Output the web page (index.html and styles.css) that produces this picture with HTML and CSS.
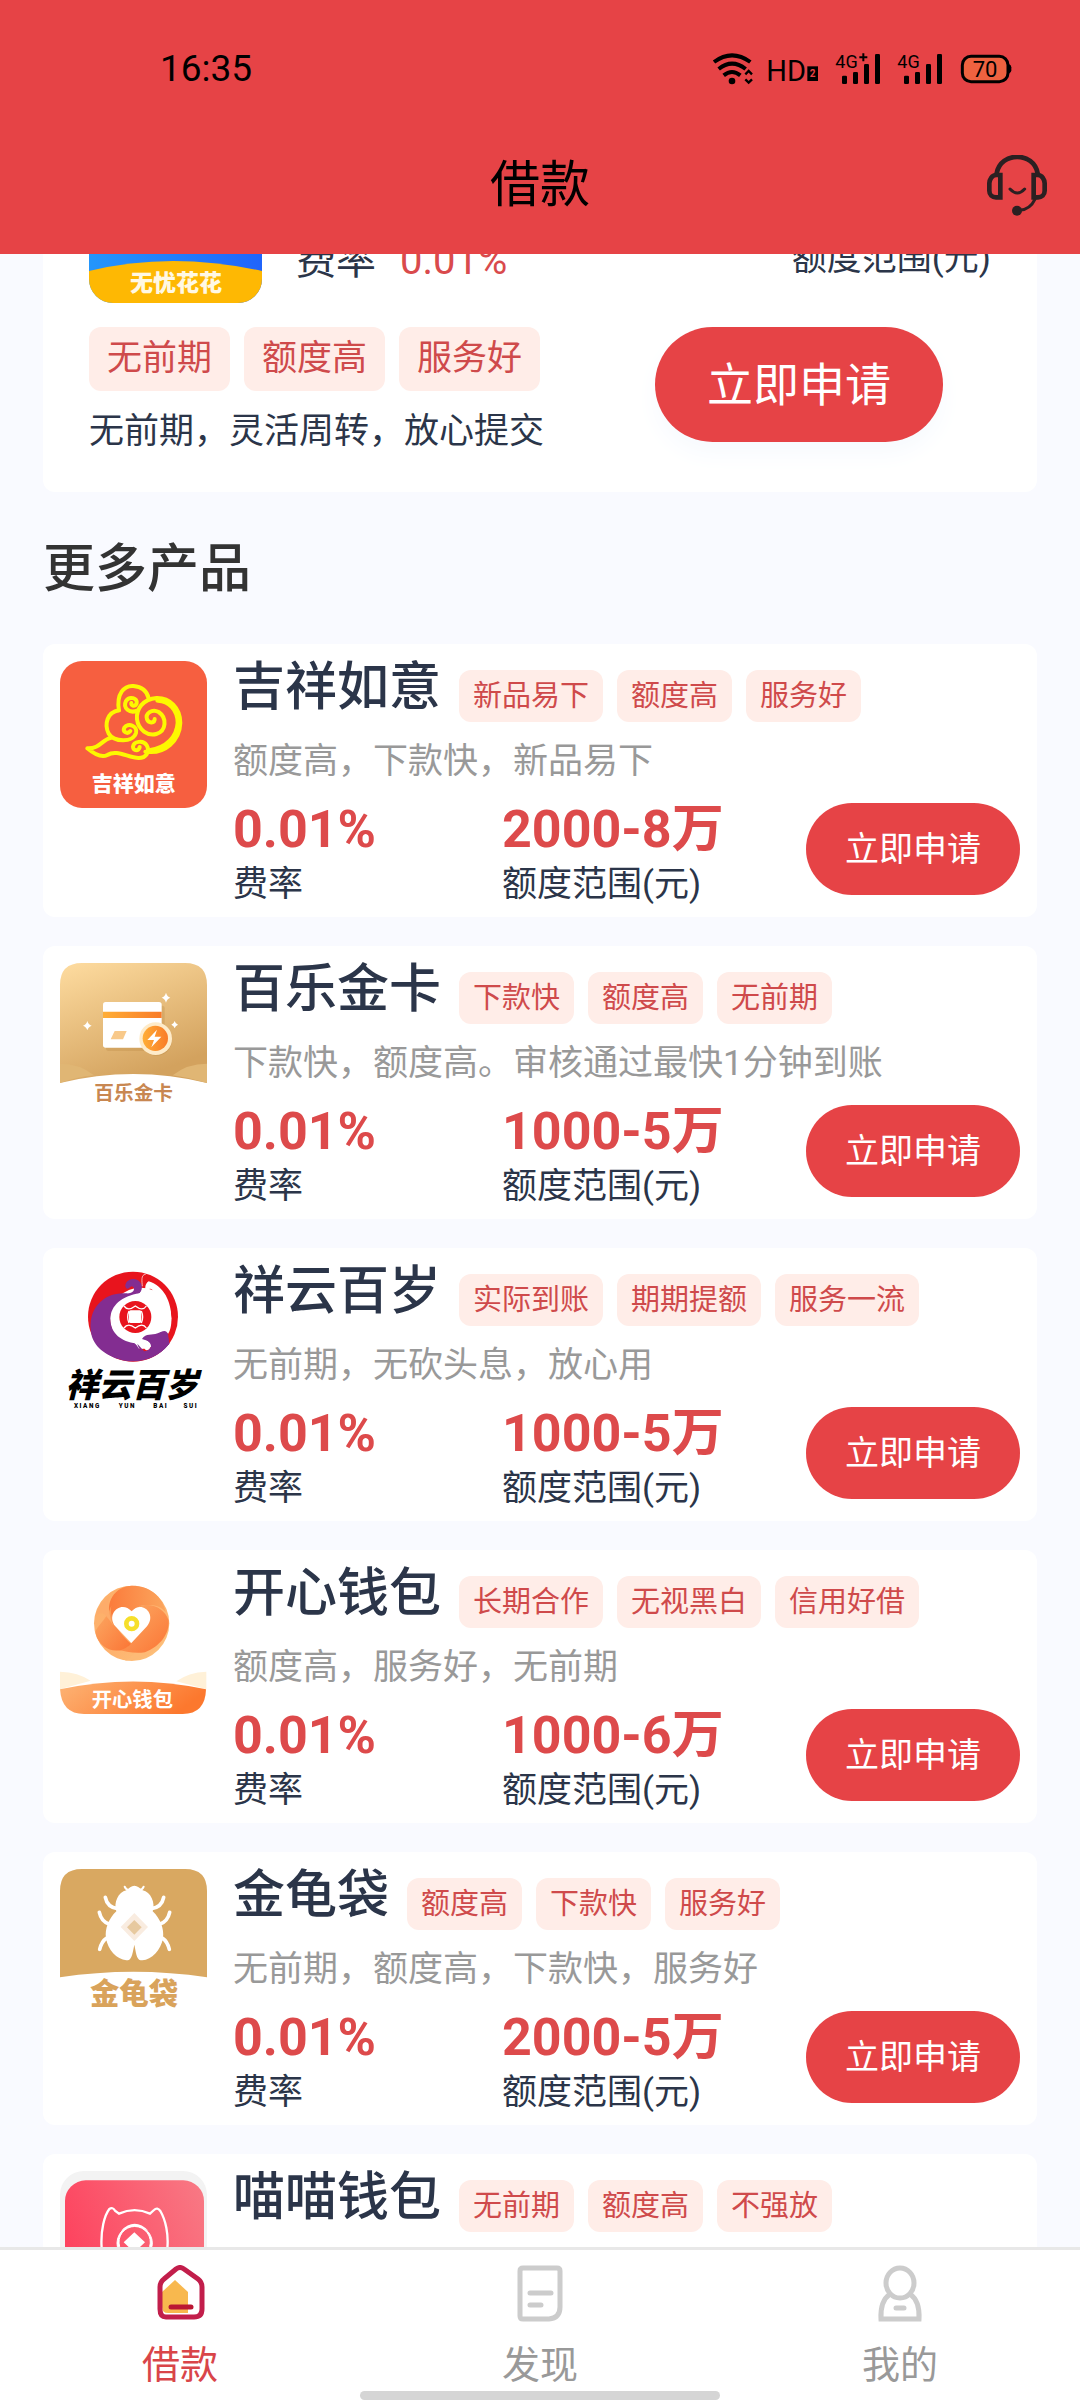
FILE: index.html
```html
<!DOCTYPE html>
<html lang="zh-CN">
<head>
<meta charset="utf-8">
<meta name="viewport" content="width=device-width, initial-scale=1">
<title>借款</title>
<link rel="stylesheet" href="styles.css">
</head>
<body>
<div class="app">
  <header class="header">
    <div class="status">
      <time class="status-time">16:35</time>
      <svg class="status-icons" viewBox="36 39 900 96" aria-hidden="true">
        <g fill="none" stroke="#000" stroke-width="9">
          <path d="M42 66Q96 26 151 66M56 87Q96 55 137 87M71 106Q96 86 121 106" stroke-width="12"/>
          <path d="M136 103l10-10 10 10M136 118l10 10 10-10" stroke-width="7"/>
          <rect x="787" y="49" width="137" height="76" rx="26" fill="#ee6240"/>
        </g>
        <circle cx="96" cy="123" r="10"/>
        <text x="199" y="123" font-size="87">HD</text>
        <rect x="322" y="79" width="32" height="44"/>
        <text x="329" y="111" font-size="30" font-weight="700" class="inverse">2</text>
        <text x="406" y="84" font-size="54">4G</text>
        <path d="M478 52h24M490 40v24" stroke="#000" stroke-width="6"/>
        <g>
          <rect x="426" y="107" width="15" height="25" rx="4"/><rect x="459" y="96" width="15" height="36" rx="4"/><rect x="492" y="72" width="15" height="60" rx="4"/><rect x="525" y="42" width="15" height="90" rx="4"/>
          <rect x="612" y="107" width="15" height="25" rx="4"/><rect x="645" y="96" width="15" height="36" rx="4"/><rect x="678" y="72" width="15" height="60" rx="4"/><rect x="711" y="42" width="15" height="90" rx="4"/>
          <path d="M926 72q8 2 8 10v9q0 8-8 10z"/>
        </g>
        <text x="592" y="84" font-size="54">4G</text>
        <text x="855" y="110" font-size="66" text-anchor="middle">70</text>
      </svg>
    </div>
    <div class="titlebar">
      <h1 class="title">借款</h1>
      <button class="service" type="button" aria-label="客服">
        <svg viewBox="861 335 180 183" fill="none" stroke="#2b2022" stroke-width="14">
          <path d="M890 390C902 324 1001 324 1013 390"/>
          <path d="M901 395h-13c-12 0-20 14-20 25v22c0 12 9 20 20 20h13zM1001 395h13c12 0 20 14 20 25v22c0 12-9 20-20 20h-13z"/>
          <path d="M930 437q22 24 44 0" stroke-width="9" stroke-linecap="round"/>
          <path d="M1006 466Q990 500 958 501" stroke-width="9"/>
          <circle cx="951" cy="502" r="15" fill="#2b2022" stroke="none"/>
        </svg>
      </button>
    </div>
  </header>

  <main class="content">
    <article class="featured">
      <div class="featured-top">
        <svg class="featured-logo" viewBox="0 0 173 173" role="img" aria-label="无忧花花">
          <defs>
            <linearGradient id="blue"><stop stop-color="#2496fb"/><stop offset="1" stop-color="#2064fb"/></linearGradient>
            <clipPath id="round"><rect width="173" height="173" rx="24"/></clipPath>
          </defs>
          <g clip-path="url(#round)">
            <rect width="173" height="173" fill="url(#blue)"/>
            <path d="M0 141Q82 121 173 141V173H0z" fill="#feb803"/>
          </g>
          <text x="87" y="161" font-size="23" font-weight="900" fill="#fff8e4" text-anchor="middle">无忧花花</text>
        </svg>
        <p class="featured-rate">费率<strong class="featured-value">0.01%</strong></p>
        <p class="featured-range">额度范围(元)</p>
      </div>
      <div class="featured-bottom">
        <div>
          <ul class="tags tags-large"><li>无前期</li><li>额度高</li><li>服务好</li></ul>
          <p class="featured-desc">无前期，灵活周转，放心提交</p>
        </div>
        <button class="apply apply-large" type="button">立即申请</button>
      </div>
    </article>

    <h2 class="section-title">更多产品</h2>

    <div class="products">
      <article class="product">
        <svg class="logo" viewBox="30 36 441 441" role="img" aria-label="吉祥如意">
          <rect x="30" y="36" width="441" height="441" rx="66" fill="#f65f40"/>
          <g fill="none" stroke="#fdf800" stroke-width="12" stroke-linecap="round" stroke-linejoin="round">
            <path d="M112 298C150 300 157 270 184 266M112 298Q150 330 172 318C200 300 235 327 266 327C288 327 301 308 290 289C280 272 251 277 249 293C249 307 268 307 269 294"/>
            <path d="M207 184C198 134 223 109 250 111C276 113 291 126 296 148M264 184C238 196 218 176 228 156C238 140 264 147 260 163C255 174 242 171 244 162"/>
            <path d="M207 184C171 190 162 226 176 254C192 280 249 282 258 252C264 229 233 221 223 236C217 249 232 257 241 246"/>
            <path d="M286 308C346 317 389 274 391 222C391 176 358 146 320 147C279 150 258 180 261 211C265 243 294 262 319 255C349 246 352 207 326 189C306 178 285 194 291 211C296 224 314 223 314 210"/>
            <path d="M298 306C352 298 382 264 385 222C385 180 356 154 324 153" stroke-width="16"/>
          </g>
          <text x="251" y="426" font-size="63" font-weight="900" fill="#fff" text-anchor="middle">吉祥如意</text>
        </svg>
        <div class="info">
          <div class="heading"><h3 class="name">吉祥如意</h3><ul class="tags"><li>新品易下</li><li>额度高</li><li>服务好</li></ul></div>
          <p class="desc">额度高，下款快，新品易下</p>
          <div class="figures">
            <p class="figure"><strong>0.01%</strong><span>费率</span></p>
            <p class="figure"><strong>2000-8万</strong><span>额度范围(元)</span></p>
            <button class="apply" type="button">立即申请</button>
          </div>
        </div>
      </article>

      <article class="product">
        <svg class="logo" viewBox="30 42 441 441" role="img" aria-label="百乐金卡">
          <defs>
            <linearGradient id="gold" x2=".45" y2="1"><stop stop-color="#fedca0"/><stop offset="1" stop-color="#d3a25e"/></linearGradient>
            <linearGradient id="orange"><stop stop-color="#ffae36"/><stop offset="1" stop-color="#f97b28"/></linearGradient>
          </defs>
          <path d="M30 402V108Q30 42 96 42H405Q471 42 471 108V402Q250 348 30 402z" fill="url(#gold)"/>
          <path d="M30 344Q90 344 132 379Q80 384 30 402zM471 344Q410 344 368 379Q420 386 471 402z" fill="#e0b674"/>
          <rect x="168" y="170" width="176" height="136" rx="8" fill="#b88743" opacity=".3"/>
          <rect x="159" y="159" width="176" height="137" rx="8" fill="#fff"/>
          <path d="M159 188h176v19H159z" fill="url(#orange)"/>
          <path d="M194 246h36l-11 25h-37z" fill="#f8c98a"/>
          <circle cx="320" cy="274" r="46" fill="#b88743" opacity=".35"/>
          <circle cx="317" cy="269" r="49" fill="#feebc9"/><circle cx="316" cy="268" r="38" fill="url(#orange)"/>
          <path d="M321 242l-29 31h20l-8 22 30-32h-20z" fill="#fff"/>
          <g fill="#fff"><path d="M348 131q3 12 13 15q-10 3-13 15q-3-12-13-15q10-3 13-15zM112 216q3 11 13 14q-10 3-13 14q-3-11-13-14q10-3 13-14zM374 216q2 8 10 11q-8 3-10 11q-2-8-10-11q8-3 10-11z"/></g>
          <text x="251" y="453" font-size="59" font-weight="700" fill="#c88751" text-anchor="middle">百乐金卡</text>
        </svg>
        <div class="info">
          <div class="heading"><h3 class="name">百乐金卡</h3><ul class="tags"><li>下款快</li><li>额度高</li><li>无前期</li></ul></div>
          <p class="desc">下款快，额度高。审核通过最快1分钟到账</p>
          <div class="figures">
            <p class="figure"><strong>0.01%</strong><span>费率</span></p>
            <p class="figure"><strong>1000-5万</strong><span>额度范围(元)</span></p>
            <button class="apply" type="button">立即申请</button>
          </div>
        </div>
      </article>

      <article class="product">
        <svg class="logo" viewBox="30 18 441 441" role="img" aria-label="祥云百岁">
          <circle cx="249" cy="173" r="135" fill="#e8141d"/>
          <circle cx="272" cy="178" r="92" fill="#fff"/>
          <path d="M124 225C110 145 165 98 230 103C255 105 257 83 245 82C239 82 239 91 231 89C218 80 232 57 253 60C276 64 282 88 269 103C215 111 182 140 181 180C182 225 215 248 258 253C269 285 294 280 303 263C304 247 288 244 279 238C298 222 313 235 329 222C343 211 354 223 358 254C318 303 262 315 212 302C165 290 130 260 124 225z" fill="#832d91"/>
          <path d="M260 107C277 100 278 91 279 82C275 98 281 108 297 108C310 105 313 90 300 89C291 91 302 99 293 100C282 96 284 73 296 67C342 82 364 128 364 178C365 200 360 218 354 225C348 210 338 216 323 223C304 230 289 222 276 240C286 256 301 251 300 267C291 280 279 272 284 258C287 246 268 252 262 260L240 240z" fill="#fff"/>
          <path d="M276 240C289 222 304 230 323 223C338 216 348 210 354 225L358 254C340 276 322 288 300 296L262 254C269 285 294 283 304 264C304 247 288 244 276 240z" fill="#832d91"/>
          <path d="M287 46C272 46 276 68 277 82" fill="none" stroke="#fff" stroke-width="2"/>
          <circle cx="256" cy="174" r="48" fill="#e8141d"/>
          <rect x="237" y="154" width="37" height="38" rx="5" fill="#fff"/>
          <path d="M222 141q12 17 34 0q22 17 33 0M222 207q12-17 34 0q22-17 33 0M237 156q-8 18 0 36M274 156q8 18 0 36" fill="none" stroke="#fff" stroke-width="4"/>
          <text x="246" y="415" font-size="100" font-weight="900" font-style="italic" text-anchor="middle">祥云百岁</text>
          <g font-size="19" font-weight="900" text-anchor="middle"><text x="110" y="446">X I A N G</text><text x="230" y="446">Y U N</text><text x="330" y="446">B A I</text><text x="420" y="446">S U I</text></g>
        </svg>
        <div class="info">
          <div class="heading"><h3 class="name">祥云百岁</h3><ul class="tags"><li>实际到账</li><li>期期提额</li><li>服务一流</li></ul></div>
          <p class="desc">无前期，无砍头息，放心用</p>
          <div class="figures">
            <p class="figure"><strong>0.01%</strong><span>费率</span></p>
            <p class="figure"><strong>1000-5万</strong><span>额度范围(元)</span></p>
            <button class="apply" type="button">立即申请</button>
          </div>
        </div>
      </article>

      <article class="product">
        <svg class="logo" viewBox="30 24 441 441" role="img" aria-label="开心钱包">
          <defs>
            <linearGradient id="ring" y2="1"><stop stop-color="#fcb16a"/><stop offset=".5" stop-color="#feb06c"/><stop offset="1" stop-color="#fcc47e"/></linearGradient>
            <linearGradient id="petal" y2="1"><stop stop-color="#fcac66"/><stop offset="1" stop-color="#fb7535"/></linearGradient>
            <linearGradient id="petal2"><stop stop-color="#fb7b3b"/><stop offset="1" stop-color="#fba65e"/></linearGradient>
            <linearGradient id="base" x2="1" y2=".3"><stop stop-color="#fdb475"/><stop offset="1" stop-color="#fc782e"/></linearGradient>
          </defs>
          <circle cx="245" cy="193" r="113" fill="url(#ring)"/>
          <path d="M185 188C160 130 195 81 247 80C297 80 337 110 347 159C325 135 292 129 252 153z" fill="url(#petal2)"/>
          <path d="M267 142C309 128 345 151 355 184C355 250 305 302 224 305C269 286 275 230 243 252L300 180z" fill="#fdba76"/>
          <path d="M267 142C309 128 345 151 356 184C359 225 330 262 285 280C250 285 225 276 205 274C225 270 236 260 243 252L300 180z" fill="url(#petal)"/>
          <path d="M184 140C178 166 190 205 243 254C209 292 151 275 137 225C132 210 160 190 176 160z" fill="url(#petal)"/>
          <path d="M180 110C170 135 178 170 190 200C172 175 160 150 137 170C145 142 160 122 180 110z" fill="#fdac6a"/>
          <path d="M244 252L196 202C166 163 215 122 245 157C274 122 322 164 291 202z" fill="#fff"/>
          <circle cx="245" cy="194" r="16" fill="#fff" stroke="#f6df2b" stroke-width="14"/>
          <path d="M30 338Q85 340 122 365L30 391zM469 338Q415 340 379 367L469 391z" fill="#fff1d8"/>
          <path d="M30 391Q250 344 468 391Q466 465 398 465H102Q35 465 30 391z" fill="url(#base)"/>
          <text x="247" y="443" font-size="61" font-weight="700" fill="#fff" text-anchor="middle">开心钱包</text>
        </svg>
        <div class="info">
          <div class="heading"><h3 class="name">开心钱包</h3><ul class="tags"><li>长期合作</li><li>无视黑白</li><li>信用好借</li></ul></div>
          <p class="desc">额度高，服务好，无前期</p>
          <div class="figures">
            <p class="figure"><strong>0.01%</strong><span>费率</span></p>
            <p class="figure"><strong>1000-6万</strong><span>额度范围(元)</span></p>
            <button class="apply" type="button">立即申请</button>
          </div>
        </div>
      </article>

      <article class="product">
        <svg class="logo" viewBox="30 30 441 441" role="img" aria-label="金龟袋">
          <path d="M30 355V96Q30 30 96 30H405Q471 30 471 96V355Q250 322 30 355z" fill="#d9a861"/>
          <g fill="none" stroke="#fff" stroke-width="11" stroke-linecap="round">
            <path d="M166 115Q172 145 203 149M148 160Q154 187 177 195M169 238Q155 247 149 271M341 115Q335 145 304 149M359 160Q353 187 330 195M338 238Q352 247 358 271"/>
            <path d="M224 83q3 9 13 11M281 83q-3 9-13 11" stroke-width="6"/>
          </g>
          <path d="M253 80C262 80 270 87 278 94C302 99 317 131 308 157C331 178 343 211 339 237C333 274 305 302 277 304C261 304 260 293 253 257C246 293 244 304 229 304C200 301 173 272 168 237C164 211 176 178 199 157C190 131 205 99 229 94C237 87 244 80 253 80z" fill="#fff"/>
          <path d="M253 162l41 42-41 42-41-42z" fill="#f9ece0"/><path d="M253 183l22 22-22 22-22-22z" fill="#e7c99f"/>
          <text x="252" y="436" font-size="88" font-weight="900" fill="#d9a35b" text-anchor="middle">金龟袋</text>
        </svg>
        <div class="info">
          <div class="heading"><h3 class="name">金龟袋</h3><ul class="tags"><li>额度高</li><li>下款快</li><li>服务好</li></ul></div>
          <p class="desc">无前期，额度高，下款快，服务好</p>
          <div class="figures">
            <p class="figure"><strong>0.01%</strong><span>费率</span></p>
            <p class="figure"><strong>2000-5万</strong><span>额度范围(元)</span></p>
            <button class="apply" type="button">立即申请</button>
          </div>
        </div>
      </article>

      <article class="product">
        <svg class="logo" viewBox="30 68 441 441" role="img" aria-label="喵喵钱包">
          <defs><linearGradient id="pink" y1=".4" x2="1" y2="0"><stop stop-color="#fd445f"/><stop offset="1" stop-color="#f87a85"/></linearGradient></defs>
          <rect x="30" y="68" width="441" height="441" rx="72" fill="#f3f3f3"/>
          <rect x="45" y="96" width="417" height="413" rx="62" fill="url(#pink)"/>
          <path d="M155 300C151 245 164 200 178 182Q188 175 195 187L207 196Q254 175 300 196L312 185Q322 175 331 188C347 215 356 258 352 300" fill="none" stroke="#fff" stroke-width="7"/>
          <path d="M202 295A53 53 0 1 1 306 295L299 295A47 47 0 1 0 209 295z" fill="#fff" stroke="#fff" stroke-width="3"/>
          <path d="M212 248Q254 205 296 248Q254 220 212 248z" fill="#fff"/>
          <path d="M253 252l32 30-32 30-32-30z" fill="#fff"/>
        </svg>
        <div class="info">
          <div class="heading"><h3 class="name">喵喵钱包</h3><ul class="tags"><li>无前期</li><li>额度高</li><li>不强放</li></ul></div>
        </div>
      </article>
    </div>
  </main>

  <nav class="tabbar">
    <a class="tab tab-active" href="#loan" aria-current="page">
      <svg class="tab-icon" viewBox="0 0 58 58">
        <path d="M11 27L24 15 37 27V48H17Q11 48 11 42z" fill="#f8b84e"/>
        <path d="M25 4Q29 1 33 4L47 14Q51 17 51 22V44Q51 52 43 52H15Q9 52 9 44V22Q9 17 13 14z" fill="none" stroke="#c21e4b" stroke-width="5"/>
        <path d="M20 42H40" stroke="#ba1733" stroke-width="5" stroke-linecap="round"/>
      </svg>
      <span>借款</span>
    </a>
    <a class="tab" href="#discover">
      <svg class="tab-icon" viewBox="0 0 58 58" fill="none" stroke="#ccc" stroke-width="5">
        <path d="M12 3H46Q49 3 49 6V42Q49 53 38 54H12Q9 54 9 51V6Q9 3 12 3z"/>
        <path d="M19 28H40M19 40H30" stroke-linecap="round"/>
      </svg>
      <span>发现</span>
    </a>
    <a class="tab" href="#mine">
      <svg class="tab-icon" viewBox="0 0 58 58" fill="none" stroke="#ccc" stroke-width="5">
        <ellipse cx="29" cy="18" rx="14" ry="15"/>
        <path d="M19 29Q9 36 10 54H48Q49 36 39 29"/>
        <path d="M25 43H33" stroke-linecap="round"/>
      </svg>
      <span>我的</span>
    </a>
    <div class="home-indicator"></div>
  </nav>
</div>
</body>
</html>
```
FILE: styles.css
```css
* { box-sizing: border-box; }

body, h1, h2, h3, p, ul { margin: 0; padding: 0; }

body {
  background: #f9faff;
  color: #2b3549;
  font-family: Roboto, "Noto Sans CJK SC", sans-serif;
  font-size: 35px;
  line-height: 44px;
}

ul { list-style: none; }
svg { display: block; flex-shrink: 0; }
button { border: 0; padding: 0; font: inherit; cursor: pointer; }
a { color: inherit; text-decoration: none; }

.app {
  display: flex;
  flex-direction: column;
  height: 100vh;
}

/* Header */
.header {
  flex-shrink: 0;
  position: relative;
  background: #e64346;
  color: #000;
}

.status {
  display: flex;
  align-items: center;
  justify-content: space-between;
  height: 116px;
  padding: 22px 68px 0 160px;
}

.status-time { font-size: 37px; }
.status-icons { width: 300px; height: 32px; overflow: visible; }
.inverse { fill: #e64346; }

.titlebar {
  display: grid;
  grid-template-columns: 1fr auto 1fr;
  align-items: center;
  height: 138px;
  padding: 0 33px;
}

.title {
  grid-column: 2;
  font-size: 50px;
  font-weight: 400;
  line-height: 62px;
}

.service { justify-self: end; background: none; }
.service svg { width: 60px; height: 61px; }

/* Scrolling area */
.content {
  flex: 1;
  min-height: 0;
  overflow: hidden;
  padding: 0 43px;
}

.featured {
  margin-top: -144px;
  padding: 20px 46px 35px;
  border-radius: 12px;
  background: #fff;
}

.featured-top { display: flex; align-items: flex-end; }
.featured-logo { width: 173px; height: 173px; }
.featured-rate { margin: 0 auto 17px 34px; font-size: 40px; line-height: 50px; }
.featured-value { margin-left: 24px; color: #d94a4c; font-weight: 400; }
.featured-range { margin-bottom: 19px; line-height: 50px; }

.featured-bottom {
  display: flex;
  align-items: flex-start;
  justify-content: space-between;
  margin-top: 24px;
  padding-right: 48px;
}

.featured-desc { margin-top: 16px; line-height: 50px; }

.section-title {
  margin: 48px 0 44px;
  color: #333;
  font-size: 52px;
  font-weight: 500;
  line-height: 60px;
}

/* Tags */
.tags { display: flex; gap: 14px; }

.tags li {
  padding: 0 14px;
  border-radius: 12px;
  background: #ffede8;
  color: #cf4a4b;
  font-size: 29px;
  line-height: 52px;
}

.tags-large li {
  padding: 0 18px;
  font-size: 35px;
  line-height: 64px;
}

/* Apply button */
.apply {
  width: 214px;
  height: 92px;
  border-radius: 46px;
  background: #e64346;
  color: #fff;
  font-size: 34px;
}

.apply-large {
  width: 288px;
  height: 115px;
  border-radius: 58px;
  box-shadow: 0 12px 24px #f7fafe;
  font-size: 46px;
}

/* Product list */
.products { display: flex; flex-direction: column; gap: 29px; }

.product {
  display: flex;
  gap: 26px;
  min-height: 273px;
  padding: 12px 17px 10px;
  border-radius: 12px;
  background: #fff;
}

.logo { width: 147px; height: 147px; margin-top: 5px; }
.info { flex: 1; min-width: 0; }
.heading { display: flex; align-items: flex-end; gap: 18px; height: 66px; }

.name {
  align-self: flex-start;
  font-size: 52px;
  font-weight: 500;
  line-height: 64px;
}

.desc { margin-top: 18px; color: #999; }

.figures {
  display: grid;
  grid-template-columns: 269px 1fr auto;
  align-items: start;
  margin-top: 16px;
}

.figures .apply { margin-top: 3px; }
.figure { display: flex; flex-direction: column; gap: 3px; }
.figure strong { color: #dd4a4b; font-size: 52px; font-weight: 700; line-height: 60px; }

/* Bottom tabs */
.tabbar {
  display: grid;
  grid-template-columns: repeat(3, 1fr);
  flex-shrink: 0;
  position: relative;
  height: 153px;
  padding-top: 15px;
  border-top: 3px solid #e8e8e8;
  background: #fff;
}

.tab {
  display: flex;
  flex-direction: column;
  align-items: center;
  gap: 20px;
  color: #999;
  font-size: 38px;
}

.tab-active { color: #d94549; }
.tab-icon { width: 58px; height: 58px; }

.home-indicator {
  position: absolute;
  bottom: 0;
  left: 50%;
  width: 360px;
  height: 9px;
  margin-left: -180px;
  border-radius: 5px;
  background: #d5d5d5;
}
```
